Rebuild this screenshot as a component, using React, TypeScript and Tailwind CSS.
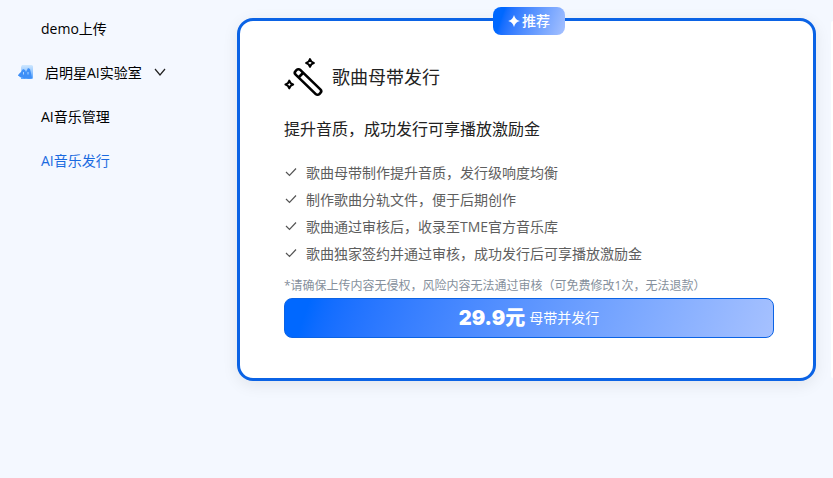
import { useState } from 'react'

const features = [
  '歌曲母带制作提升音质，发行级响度均衡',
  '制作歌曲分轨文件，便于后期创作',
  '歌曲通过审核后，收录至TME官方音乐库',
  '歌曲独家签约并通过审核，成功发行后可享播放激励金',
]

function LabIcon() {
  return (
    <svg viewBox="0 0 16 16" className="h-4 w-4 shrink-0" aria-hidden="true">
      <defs>
        <linearGradient id="lab-back" x1="0" y1="0" x2="0" y2="1">
          <stop offset="0" stopColor="#cfe8ff" />
          <stop offset="1" stopColor="#5aa5ff" />
        </linearGradient>
      </defs>
      <path d="M5 0h9.500a1.500 1.500 0 0 1 1.500 1.500v11a1.500 1.500 0 0 1-1.500 1.500H4V2z" fill="url(#lab-back)" />
      <path d="M1 11c0-2 2-3 3-4l2-3 2 1 1 2 2-4 2 1 1 4 1 5c-2 1-4 1-6 0-2 1-3 0-4-1-1 0-2 1-3-1z" fill="#3f90f7" />
      <path d="M6.500 7v2.500M11 7v2.500" stroke="#a9d3ff" strokeWidth="1" />
    </svg>
  )
}

function WandIcon() {
  return (
    <svg
      viewBox="0 0 40 40"
      className="h-10 w-10 shrink-0"
      fill="none"
      stroke="#000"
      strokeWidth="2.600"
      strokeLinejoin="round"
      aria-hidden="true"
    >
      <rect x="-3.300" y="-16.500" width="6.600" height="33" rx="2.500" transform="translate(24 25) rotate(-46)" />
      <path d="M14.500 20.500l5-5" />
      <path d="M26 2.200c.7 2.400 1.400 3.100 3.800 3.800-2.400.7-3.100 1.400-3.800 3.800-.7-2.400-1.400-3.100-3.800-3.800 2.400-.7 3.100-1.400 3.800-3.800z" strokeWidth="2.200" />
      <path d="M5.300 23.700c.7 2.400 1.400 3.100 3.800 3.800-2.400.7-3.100 1.400-3.800 3.800-.7-2.400-1.400-3.100-3.800-3.800 2.400-.7 3.100-1.400 3.800-3.800z" strokeWidth="2.200" />
    </svg>
  )
}

function CheckIcon() {
  return (
    <svg viewBox="0 0 14 14" className="h-3.5 w-3.5 shrink-0" fill="none" stroke="#555" strokeWidth="1.2" aria-hidden="true">
      <path d="M2 6l3.500 3.500L12 2.500" />
    </svg>
  )
}

export default function App() {
  const [open, setOpen] = useState(true)

  return (
    <div className="flex min-h-screen overflow-hidden bg-[#f4f8ff] font-['Open_Sans','Noto_Sans_CJK_SC',sans-serif] text-sm text-black">
      <nav className="w-[237px] shrink-0 pt-2">
        <a href="#demo" className="flex h-11 items-center pb-0.5 pl-[41px]">
          demo上传
        </a>
        <button
          type="button"
          aria-expanded={open}
          onClick={() => setOpen(!open)}
          className="flex h-11 w-full items-center pb-0.5 pl-[17px]"
        >
          <LabIcon />
          <span className="ml-3">启明星AI实验室</span>
          <svg viewBox="0 0 12 12" className="ml-3 h-3 w-3" fill="none" stroke="#222" strokeWidth="1.2" aria-hidden="true">
            <path d="M1 2l5 6 5-6" />
          </svg>
        </button>
        {open && (
          <>
            <a href="#manage" className="flex h-11 items-center pb-0.5 pl-[41px]">
              AI音乐管理
            </a>
            <a href="#release" className="flex h-11 items-center pb-0.5 pl-[41px] text-[#1a6ae0]" aria-current="page">
              AI音乐发行
            </a>
          </>
        )}
      </nav>

      <main className="flex min-w-0 flex-1 items-start gap-[15px] pt-[18px]">
        <section className="relative min-w-0 flex-1 rounded-2xl border-3 border-[#0b63e5] bg-white pt-9 pr-[39px] pb-10 pl-11 shadow-[0_4px_16px_rgba(0,0,0,0.08)]">
          <div className="absolute -top-3.5 right-62 flex h-7 w-[72px] items-center justify-center gap-0.5 rounded-lg bg-linear-110 from-[#0068ff] from-15% to-[#a6c1ff] text-sm font-medium text-white">
            <svg viewBox="0 0 12 12" className="h-3 w-3" fill="#fff" aria-hidden="true">
              <path d="M6 0c1 3.500 2.500 5 6 6-3.500 1-5 2.500-6 6-1-3.500-2.500-5-6-6 3.500-1 5-2.500 6-6z" />
            </svg>
            推荐
          </div>

          <div className="flex items-center gap-2">
            <WandIcon />
            <h2 className="text-lg text-[#222]">歌曲母带发行</h2>
          </div>
          <p className="mt-5 text-base text-[#222]">提升音质，成功发行可享播放激励金</p>

          <ul className="mt-[18px] text-[#5e5e5e]">
            {features.map((feature) => (
              <li key={feature} className="flex h-[27px] items-center gap-2">
                <CheckIcon />
                {feature}
              </li>
            ))}
          </ul>

          <p className="mt-[9px] text-xs leading-5 text-[#86909c]">
            *请确保上传内容无侵权，风险内容无法通过审核（可免费修改1次，无法退款）
          </p>
          <button
            type="button"
            className="mt-0.5 flex h-10 w-full items-center justify-center gap-1 rounded-lg border border-[#0b63e5] bg-linear-110 from-[#0068ff] from-5% to-[#a6c1ff] text-white"
          >
            <span className="font-['Inter','Noto_Sans_CJK_SC',sans-serif] text-xl font-black">29.9元</span>
            <span>母带并发行</span>
          </button>
        </section>
        <section className="mt-[3px] h-[357px] w-0.5 shrink-0 rounded-l-2xl bg-white" />
      </main>
    </div>
  )
}
